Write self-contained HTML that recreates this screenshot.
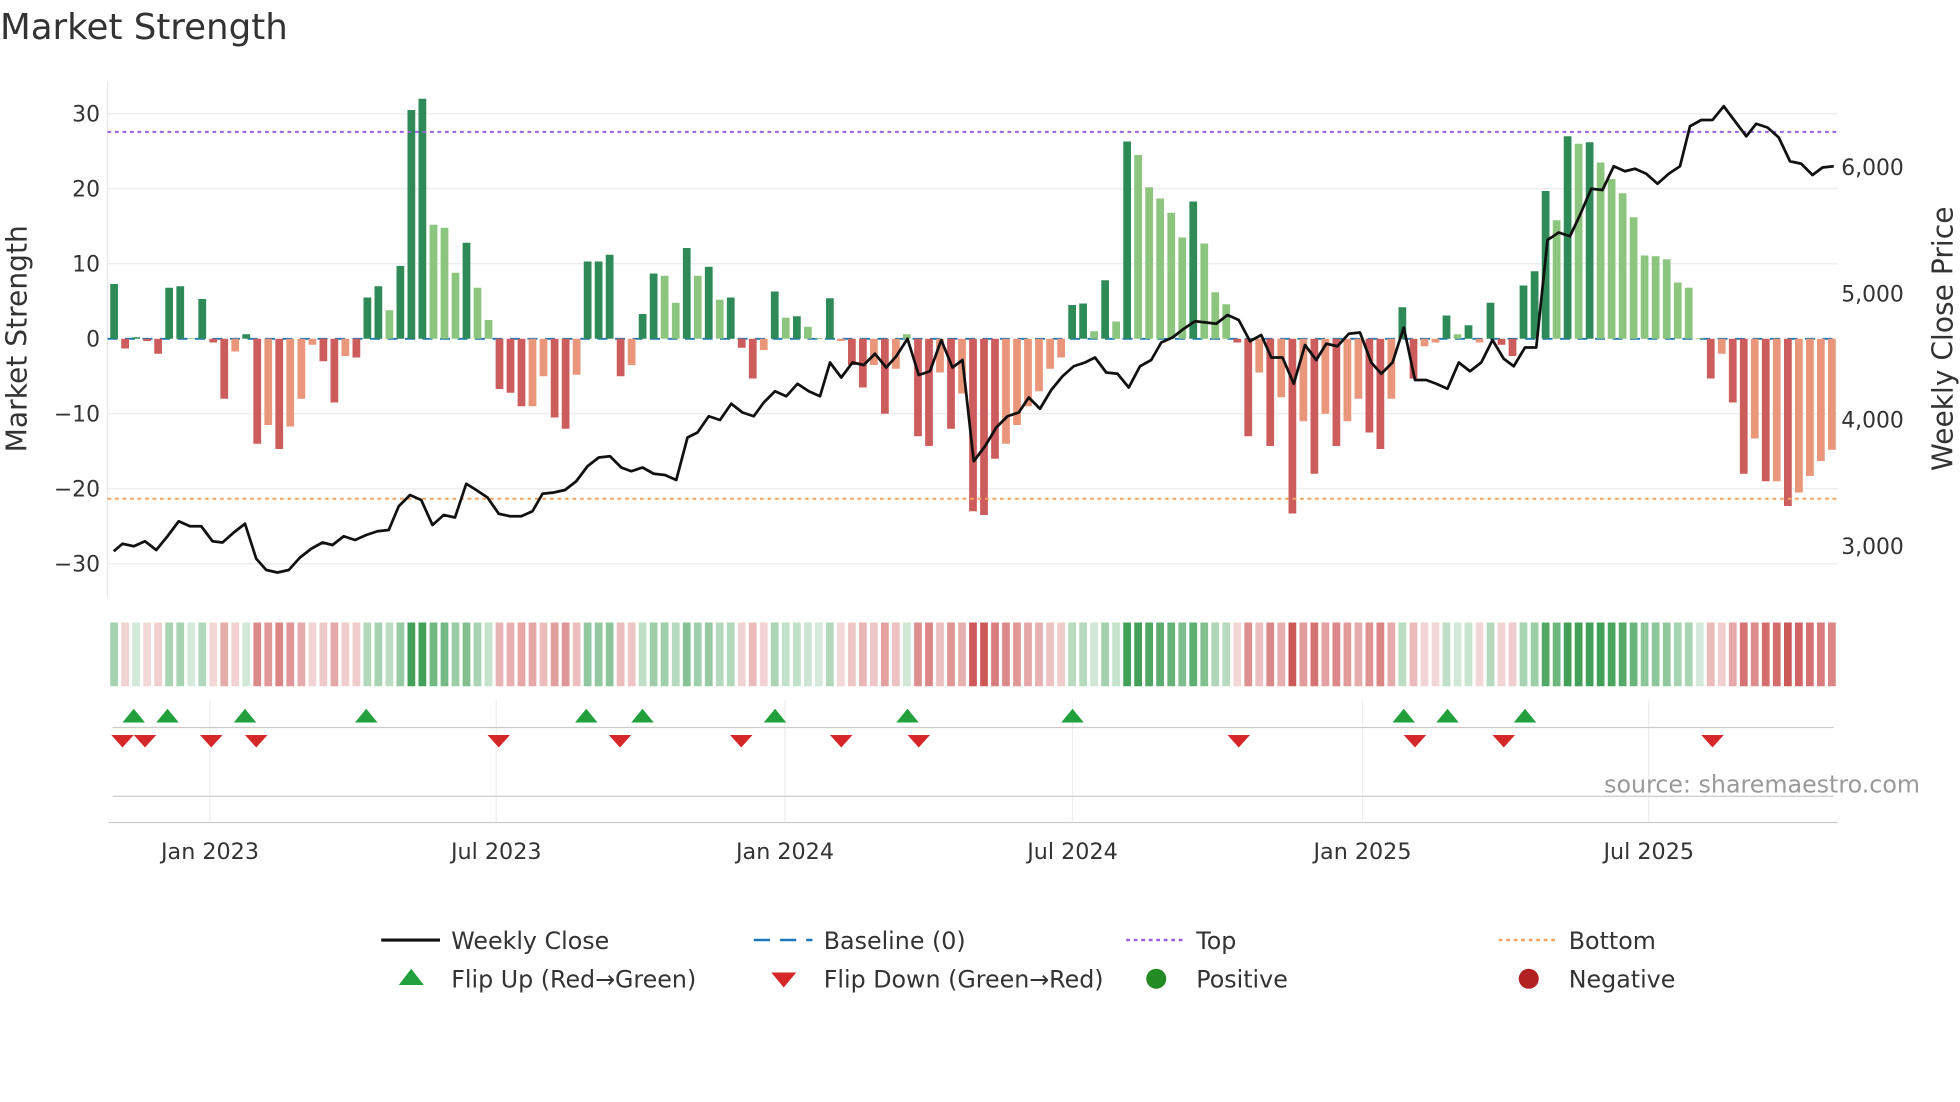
<!DOCTYPE html>
<html><head><meta charset="utf-8"><style>
html,body{margin:0;padding:0;background:#fff;}
svg{display:block;font-family:"DejaVu Sans","Liberation Sans",sans-serif;}
</style></head><body>
<svg id="s" width="1960" height="1102" viewBox="0 0 1568 881.6" xmlns="http://www.w3.org/2000/svg">
<rect width="1568" height="882" fill="#fff"/>
<text x="0" y="31" font-size="28.5" fill="#333">Market Strength</text>
<g id="grid" stroke="#ebebeb" stroke-width="1">
<line x1="86" x2="1470" y1="91" y2="91"/><line x1="86" x2="1470" y1="151" y2="151"/>
<line x1="86" x2="1470" y1="211" y2="211"/><line x1="86" x2="1470" y1="331" y2="331"/>
<line x1="86" x2="1470" y1="391" y2="391"/><line x1="86" x2="1470" y1="451" y2="451"/>
</g>
<line x1="86" x2="86" y1="65" y2="478" stroke="#e6e6e6"/>
<g font-size="17.5" fill="#333" text-anchor="end">
<text x="80" y="97">30</text><text x="80" y="157">20</text><text x="80" y="217">10</text>
<text x="80" y="277">0</text><text x="80" y="337">−10</text><text x="80" y="397">−20</text><text x="80" y="457">−30</text>
</g>
<g font-size="17.5" fill="#333">
<text x="1473" y="140">6,000</text><text x="1473" y="241">5,000</text><text x="1473" y="342">4,000</text><text x="1473" y="443">3,000</text>
</g>
<text transform="translate(21,271) rotate(-90)" font-size="22.5" fill="#333" text-anchor="middle">Market Strength</text>
<text transform="translate(1562,271) rotate(-90)" font-size="22.5" fill="#333" text-anchor="middle">Weekly Close Price</text>
<line x1="86" x2="1470" y1="271" y2="271" stroke="#1f77b4" stroke-width="1.5" stroke-dasharray="8,6"/>
<g id="bars"></g>
<line x1="86" x2="1470" y1="105.5" y2="105.5" stroke="#9b5fe0" stroke-width="1.6" stroke-dasharray="3,3"/>
<line x1="86" x2="1470" y1="399" y2="399" stroke="#f4a460" stroke-width="1.6" stroke-dasharray="3,3"/>
<polyline id="price" fill="none" stroke="#111" stroke-width="2.2" stroke-linejoin="round"/>
<g id="heat"></g>
<g stroke="#eee"><line x1="168" x2="168" y1="560" y2="658"/><line x1="397" x2="397" y1="560" y2="658"/><line x1="628" x2="628" y1="560" y2="658"/><line x1="858" x2="858" y1="560" y2="658"/><line x1="1090" x2="1090" y1="560" y2="658"/><line x1="1319" x2="1319" y1="560" y2="658"/></g>
<line x1="90" x2="1467" y1="582" y2="582" stroke="#ccc"/>
<line x1="90" x2="1467" y1="637" y2="637" stroke="#ccc"/>
<line x1="87" x2="1470" y1="658" y2="658" stroke="#ccc"/>
<g id="tri"></g>
<text x="1536" y="634" font-size="19" fill="#999" text-anchor="end">source: sharemaestro.com</text>
<g font-size="17.8" fill="#333" text-anchor="middle">
<text x="168" y="687">Jan 2023</text><text x="397" y="687">Jul 2023</text><text x="628" y="687">Jan 2024</text>
<text x="858" y="687">Jul 2024</text><text x="1090" y="687">Jan 2025</text><text x="1319" y="687">Jul 2025</text>
</g>
<g font-size="19" fill="#333">
<line x1="305" x2="352" y1="752" y2="752" stroke="#111" stroke-width="2.5"/><text x="361" y="759">Weekly Close</text>
<line x1="603" x2="650" y1="752" y2="752" stroke="#1f77b4" stroke-width="2" stroke-dasharray="13,8"/><text x="659" y="759">Baseline (0)</text>
<line x1="901" x2="948" y1="752" y2="752" stroke="#9b5fe0" stroke-width="2" stroke-dasharray="3,3"/><text x="957" y="759">Top</text>
<line x1="1199" x2="1246" y1="752" y2="752" stroke="#f4a460" stroke-width="2" stroke-dasharray="3,3"/><text x="1255" y="759">Bottom</text>
<polygon points="319,788 329,775 339,788" fill="#22a03c"/><text x="361" y="790">Flip Up (Red→Green)</text>
<polygon points="617,778 637,778 627,790" fill="#d62728"/><text x="659" y="790">Flip Down (Green→Red)</text>
<circle cx="925" cy="783" r="8" fill="#228b22"/><text x="957" y="790">Positive</text>
<circle cx="1223" cy="783" r="8" fill="#b22222"/><text x="1255" y="790">Negative</text>
</g>
</svg>
<script>
var D="7.3G -1.3R 0.2G -0.3R -2R 6.8G 7G 0.1g 5.3G -0.5R -8R -1.7r 0.6G -14R -11.5r -14.7R -11.7r -8r -0.8r -3R -8.5R -2.3r -2.5R 5.5G 7G 3.8g 9.7G 30.5G 32G 15.2g 14.8g 8.8g 12.8G 6.8g 2.5g -6.7R -7.2R -9R -9r -5r -10.5R -12R -4.8r 10.3G 10.3G 11.2G -5R -3.5r 3.3G 8.7G 8.4g 4.8g 12.1G 8.4g 9.6G 5.2g 5.5G -1.2R -5.3R -1.5r 6.3G 2.8g 3G 1.6g 0.1g 5.4G -0.3r -3.5R -6.5R -3.5r -10R -4r 0.6g -13R -14.3R -4.5r -12R -7.3r -23R -23.5R -16R -14r -11.5r -9r -7r -4r -2.5r 4.5G 4.7G 1g 7.8G 2.3g 26.3G 24.5g 20.2g 18.7g 16.8g 13.5g 18.3G 12.7g 6.2g 4.6g -0.5R -13R -4.5r -14.3R -7.8r -23.3R -11r -18R -10r -14.3R -11r -8r -12.5R -14.7R -8r 4.2G -5.3R -1r -0.5r 3.1G 0.6g 1.8G -0.5r 4.8G -0.8R -2.3R 7.1G 9G 19.7G 15.8g 27G 26g 26.2G 23.5g 21.3g 19.4g 16.2g 11.1g 11g 10.6g 7.5g 6.8g 0.1g -5.3R -2r -8.5R -18R -13.3r -19R -19r -22.3R -20.5r -18.3r -16.3r -14.8r".split(" ");
var C={G:"#2e8b57",g:"#8cc67e",R:"#cd5c5c",r:"#e9967a"};
var b="",h="",n=D.length,step=(1470-87)/n;
D.forEach(function(s,i){var v=parseFloat(s),t=s.slice(-1),x=87+i*step+1.2,w=step-2.6;
var y0=271,y1=271-v*6;b+='<rect x="'+x.toFixed(1)+'" y="'+Math.min(y0,y1).toFixed(1)+'" width="'+w.toFixed(1)+'" height="'+Math.max(0.5,Math.abs(y1-y0)).toFixed(1)+'" fill="'+C[t]+'"/>';
var a=Math.min(0.9,0.2+Math.abs(v)/32);var col=v>=0?"rgba(46,150,70,"+a.toFixed(2)+")":"rgba(200,70,70,"+a.toFixed(2)+")";
h+='<rect x="'+x.toFixed(1)+'" y="498" width="'+w.toFixed(1)+'" height="51" fill="'+col+'"/>';});
document.getElementById("bars").innerHTML=b;document.getElementById("heat").innerHTML=h;
var P="91,441 98,435 107,437 116,433 125,440 134,429 143,417 152,421 161,421 170,433 178,434 187,426 196,419 205,447 213,456 222,458 231,456 240,446 249,439 258,434 266,436 275,429 284,432 293,428 302,425 311,424 319,405 328,396 337,400 346,420 355,412 364,414 373,387 381,392 390,398 399,411 408,413 417,413 426,409 434,395 443,394 452,392 461,385 470,373 479,366 488,365 497,374 505,377 514,374 523,379 532,380 541,384 550,350 558,346 567,333 576,336 585,323 594,330 603,333 611,322 620,313 629,317 638,307 647,313 656,317 664,290 673,302 682,290 691,292 700,283 709,294 717,285 726,271 735,300 744,297 753,272 762,294 770,288 779,369 788,357 797,342 806,333 815,330 823,318 832,327 841,312 850,301 859,293 868,290 876,286 885,298 894,299 903,310 912,293 921,288 929,274 938,270 947,263 956,257 965,258 973,259 982,252 991,256 1000,273 1009,268 1017,286 1026,286 1035,307 1044,276 1053,288 1061,275 1070,277 1079,267 1088,266 1097,290 1105,299 1114,290 1123,262 1132,304 1141,304 1149,307 1158,311 1167,290 1176,297 1185,290 1194,272 1203,287 1211,293 1220,278 1229,278 1238,192 1247,186 1256,189 1264,172 1273,151 1282,152 1291,133 1300,137 1308,135 1317,139 1326,147 1335,139 1344,133 1352,101 1361,96 1370,96 1379,85 1388,97 1397,109 1405,99 1414,102 1423,110 1432,129 1441,131 1450,140 1458,134 1467,133";
document.getElementById("price").setAttribute("points",P);
var t="";[107,134,196,293,469,514,620,726,858,1123,1158,1220].forEach(function(x){t+='<polygon points="'+(x-9)+',578 '+x+',567 '+(x+9)+',578" fill="#22a03c"/>';});
[98,116,169,205,399,496,593,673,735,991,1132,1203,1370].forEach(function(x){t+='<polygon points="'+(x-9)+',588 '+(x+9)+',588 '+x+',598" fill="#d62728"/>';});
document.getElementById("tri").innerHTML=t;
</script>
</body></html>
